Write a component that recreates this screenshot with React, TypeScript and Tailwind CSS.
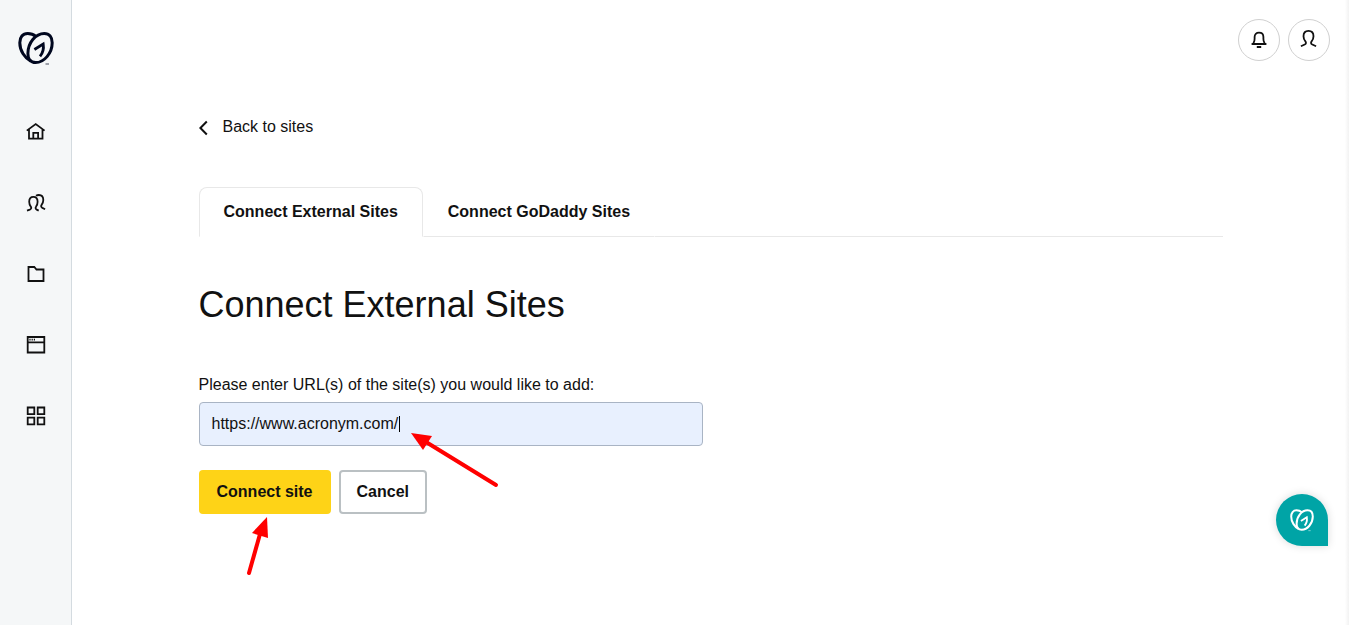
import { useState } from "react";
import type { ReactNode } from "react";

type IconProps = { children: ReactNode };

function Icon({ children }: IconProps) {
  return (
    <svg
      viewBox="0 0 24 24"
      className="w-6 h-6"
      fill="none"
      stroke="currentColor"
      strokeWidth="1.8"
      aria-hidden="true"
    >
      {children}
    </svg>
  );
}

function Logo({ className }: { className: string }) {
  return (
    <svg
      viewBox="0 0 36 34"
      className={className}
      fill="none"
      stroke="currentColor"
      strokeWidth="3"
      aria-hidden="true"
    >
      {/* right loop */}
      <path d="M17.600 31.600C12.600 31.600 9.900 27.800 9.900 22.500 9.900 12 17.500 2.500 26.300 2.500c5 0 7.900 3.700 7.900 9.300C34.200 22.200 26 31.600 17.600 31.600z" />
      {/* left loop, tucked behind the right one */}
      <path d="M17.900 5.400C15.500 3.400 12.700 2.500 9.700 2.500 4.700 2.500 1.800 6.300 1.800 11.700c0 8 5 15.400 11 18.500" />
      <path d="M16.400 18.500l8.800-5.500c.9 5.600-.6 9.300-3.200 12.400" strokeWidth="2.800" />
      <path d="M27.500 33h3.500" strokeWidth="1.200" opacity="0.600" />
    </svg>
  );
}

const menuItems = [
  {
    label: "Home",
    icon: (
      <>
        <path d="M2.8 10.6 11.7 4l8.9 6.600M5 9.400V18.700h13.500V9.400" />
        <path d="M9.300 18.700v-5.800h4.800v5.800" />
      </>
    ),
  },
  {
    label: "Clients",
    icon: (
      <>
        <path d="M3 19.600l2.800-1c1.500-.6 1.900-1.800 1-3C5.700 14.200 5.200 12.700 5.200 10.800c0-3.200 1.500-5 4.200-5s4.200 1.800 4.200 5c0 1.900-.5 3.400-1.500 4.800-.9 1.200-.6 2.400.6 3l2 1" />
        <path d="M12 4.800c.9-.6 1.900-.8 2.900-.8 2.800 0 4.400 1.900 4.400 5.100 0 1.900-.6 3.400-1.700 4.800-.9 1.200-.5 2.300.8 3l2.700 1.300" />
      </>
    ),
  },
  {
    label: "Projects",
    icon: <path d="M4.500 5h5.800l2.200 2.500h7V19h-15z" />,
  },
  {
    label: "Sites",
    icon: (
      <>
        <path d="M3.700 4h16.600v15.500H3.700zM3.700 9.300h16.600" />
        <path d="M5.400 6.600h1.200M7.600 6.600h1.200M9.800 6.600h1.200" strokeWidth="1.600" />
      </>
    ),
  },
  {
    label: "Tools",
    icon: (
      <path d="M3.700 3.500h6.600v6.600H3.700zM13.700 3.500h6.600v6.600h-6.600zM3.700 13.700h6.600v6.600H3.700zM13.700 13.700h6.600v6.600h-6.600z" />
    ),
  },
];

const tabs = ["Connect External Sites", "Connect GoDaddy Sites"];

export default function App() {
  const [activeTab, setActiveTab] = useState(tabs[0]);
  const [url, setUrl] = useState("https://www.acronym.com/");

  return (
    <div className="min-h-screen flex bg-white text-[#111] font-['Liberation_Sans',Arial,sans-serif]">
      {/* Sidebar */}
      <aside className="w-18 shrink-0 bg-[#f5f7f8] border-r border-[#d4dbe0]">
        <a
          href="#"
          aria-label="GoDaddy"
          className="h-24 flex items-center justify-center text-[#00071f]"
        >
          <Logo className="w-9 h-[34px]" />
        </a>
        <nav>
          {menuItems.map((item) => (
            <a
              key={item.label}
              href="#"
              aria-label={item.label}
              className="h-[71px] flex items-center justify-center"
            >
              <Icon>{item.icon}</Icon>
            </a>
          ))}
        </nav>
      </aside>

      <div className="flex-1 min-w-0">
        {/* Top bar */}
        <header className="flex justify-end gap-2 pt-[19px] pr-[19px]">
          <button
            aria-label="Notifications"
            className="w-[42px] h-[42px] rounded-full border border-[#d0d0d0] flex items-center justify-center"
          >
            <Icon>
              <path d="M4.600 16h14.800M6.700 16V14.500c.6-.8.9-2 .9-3.700V8.900c0-2.600 1.700-4.300 4.400-4.300s4.400 1.700 4.400 4.300v1.900c0 1.700.3 2.900.9 3.700V16M9.800 19h4.400" />
            </Icon>
          </button>
          <button
            aria-label="Account"
            className="w-[42px] h-[42px] rounded-full border border-[#d0d0d0] flex items-center justify-center"
          >
            <Icon>
              <path d="M3.900 18.200l3.800-1.700c1.500-.7 1.600-2 .7-3.100C7.200 12 6.500 10.400 6.500 8.300c0-3.300 2-5.400 5-5.400s5 2.100 5 5.400c0 2.100-.7 3.700-1.900 5.100-.9 1.100-.8 2.400.7 3.100l3.800 1.700" />
            </Icon>
          </button>
        </header>

        <main className="max-w-5xl mx-auto pt-[54px]">
          <a href="#" className="flex w-fit items-center gap-3.5 leading-6">
            <svg
              viewBox="0 0 10 16"
              className="w-2.5 h-4 mt-0.5"
              fill="none"
              stroke="currentColor"
              strokeWidth="2"
              aria-hidden="true"
            >
              <path d="M7.800 1.500 1.400 8l6.400 6.500" />
            </svg>
            Back to sites
          </a>

          {/* Tabs */}
          <div role="tablist" className="flex mt-12">
            {tabs.map((tab) => (
              <button
                key={tab}
                role="tab"
                aria-selected={tab === activeTab}
                onClick={() => setActiveTab(tab)}
                className={`h-[50px] px-6 font-bold border ${
                  tab === activeTab
                    ? "rounded-t-lg border-[#e8e8e8] border-b-transparent"
                    : "border-transparent border-b-[#e8e8e8]"
                }`}
              >
                {tab}
              </button>
            ))}
            <div className="flex-1 border-b border-[#e8e8e8]" />
          </div>

          <h1 className="mt-11 text-4xl leading-12">{activeTab}</h1>

          {/* URL form */}
          <form
            className="relative mt-11"
            onSubmit={(e) => e.preventDefault()}
          >
            <label htmlFor="site-url" className="block leading-6">
              Please enter URL(s) of the site(s) you would like to add:
            </label>
            <div className="relative mt-[5px] max-w-[504px]">
              <input
                id="site-url"
                type="text"
                value={url}
                onChange={(e) => setUrl(e.target.value)}
                className="w-full h-11 px-3 rounded border border-[#a9b4c4] bg-[#e8f0fe] outline-none caret-transparent"
              />
              <span className="absolute left-[200px] top-3.5 w-px h-4 bg-black" />
            </div>
            <div className="flex gap-2 mt-6">
              <button
                type="submit"
                className="h-11 px-4 rounded border-2 border-[#fed317] bg-[#fed317] font-bold"
              >
                Connect site
              </button>
              <button
                type="button"
                className="h-11 px-4 rounded border-2 border-[#bac0c3] bg-white font-bold"
              >
                Cancel
              </button>
            </div>

            {/* Arrows pointing at the field and the button */}
            <svg
              viewBox="0 1 260 150"
              className="absolute left-10 top-14 w-[260px] h-[150px] pointer-events-none"
              fill="#ff0000"
              stroke="#ff0000"
              strokeWidth="4"
              strokeLinecap="round"
              aria-hidden="true"
            >
              <path d="M257 57 187 14" />
              <path d="M172 5 193 8 184 22z" stroke="none" />
              <path d="M10 145 21 106" />
              <path d="M28 89 29 110 13 105z" stroke="none" />
            </svg>
          </form>
        </main>
      </div>

      {/* Help bubble */}
      <button
        aria-label="Help"
        className="fixed right-[21px] bottom-[79px] w-13 h-13 rounded-full rounded-br-none bg-[#00a4a6] text-white flex items-center justify-center shadow-[0_0_8px_rgba(0,0,0,0.15)]"
      >
        <Logo className="w-6 h-6" />
      </button>

      {/* Edge shadow */}
      <div className="fixed inset-y-0 right-0 w-1 bg-gradient-to-r from-white to-[#f2f2f2]" />
    </div>
  );
}
